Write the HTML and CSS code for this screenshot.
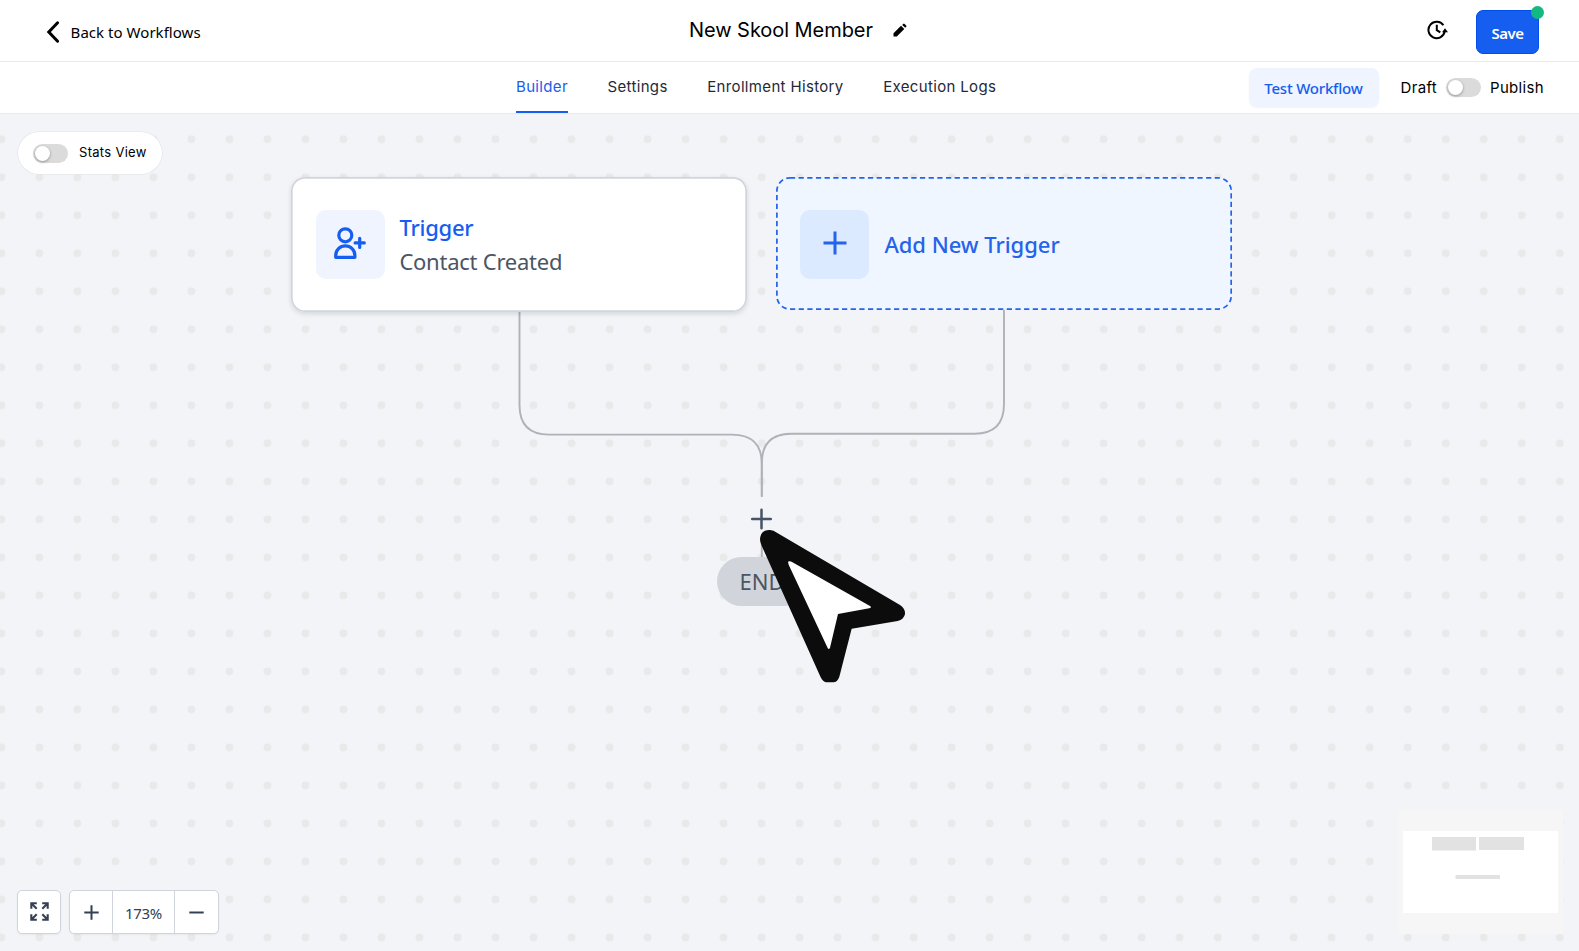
FILE: index.html
```html
<!DOCTYPE html>
<html lang="en">
<head>
<meta charset="utf-8">
<title>New Skool Member</title>
<link rel="stylesheet" href="styles.css">
</head>
<body>
<header class="topbar">
  <a class="back">
    <svg width="14" height="24" viewBox="0 0 14 24"><path d="M11.6 2.8 2.8 12l8.8 9.2" fill="none" stroke="#000" stroke-width="3" stroke-linecap="round"/></svg>
    <span class="back-label">Back to Workflows</span>
  </a>
  <div class="title">
    <span class="title-text">New Skool Member</span>
    <svg class="pencil" width="14" height="14" viewBox="0 0 14 14"><path d="M.5 10.2 8 2.7l3.3 3.3-7.5 7.5H.5zM9.2 1.9l1-1q.7-.6 1.4 0l1.6 1.6q.6.7 0 1.3l-1 1z"/></svg>
  </div>
  <div class="actions">
    <svg class="history" width="21" height="20" viewBox="0 0 21 20"><g fill="none" stroke="#000" stroke-width="2"><path d="M16.4 5.3A8.2 8.2 0 1 0 17.7 11.5"/><path d="M9.8 4.8v5.4l3.5 2.2"/></g><path d="M18 8.2l3 4h-6z"/></svg>
    <button class="save">Save<i class="unsaved"></i></button>
  </div>
</header>
<nav class="subbar">
  <div class="tabs">
    <a class="tab tab-active">Builder</a>
    <a class="tab">Settings</a>
    <a class="tab">Enrollment History</a>
    <a class="tab">Execution Logs</a>
  </div>
  <div class="status">
    <button class="test">Test Workflow</button>
    <span class="state draft">Draft</span>
    <i class="toggle"></i>
    <span class="state">Publish</span>
  </div>
</nav>
<main class="canvas">
  <svg class="layer" width="1579" height="837">
    <defs><pattern id="dots" x="-17.65" y="6.2" width="38.01" height="38.01" patternUnits="userSpaceOnUse"><circle cx="19" cy="19" r="3.9" fill="#e8e9e9"/></pattern></defs>
    <rect width="1579" height="837" fill="url(#dots)"/>
    <g fill="none" stroke="#b1b1b7" stroke-width="1.9">
      <path d="M519.5 197v94Q519.5 320.6 549 320.6H732Q761.8 320.6 761.8 350V382.7"/>
      <path d="M1004 196v94Q1004 319.7 974.5 319.7H791.5Q761.8 319.7 761.8 349V382.7"/>
    </g>
    <rect x="743" y="386" width="38" height="38" rx="8" fill="#f2f4f7"/>
    <path d="M761.8 427v17" stroke="#b1b1b7" stroke-width="1.9"/>
    <path d="M761.5 395.7v18.6M752.2 405h18.6" stroke="#475467" stroke-width="2.5" stroke-linecap="round"/>
  </svg>
  <section class="node trigger">
    <div class="tile"><svg width="40" height="40" viewBox="0 0 40 40" fill="none" stroke="#155eef" stroke-width="3.2" stroke-linecap="round" stroke-linejoin="round"><circle cx="15.3" cy="11.3" r="6.5"/><path d="M5.7 33.3v-1.8a9.6 9.6 0 0 1 19.2 0v1.8zM29.7 14.3v9.2M25.1 18.9h9.2"/></svg></div>
    <div class="copy"><span class="kind">Trigger</span><span class="desc">Contact Created</span></div>
  </section>
  <section class="node add">
    <svg class="dash" width="456" height="133"><rect x=".9" y=".9" width="454.3" height="131.2" rx="13" fill="#eff6ff" stroke="#2563eb" stroke-width="1.73" stroke-dasharray="5.25 3.42"/></svg>
    <div class="tile tile-add"><svg width="24" height="24" viewBox="0 0 24 24"><path d="M12 .5v23M.5 12h23" stroke="#2563eb" stroke-width="3"/></svg></div>
    <span class="add-label">Add New Trigger</span>
  </section>
  <div class="end">END</div>
  <svg class="cursor" width="220" height="210" viewBox="0 0 660 630">
    <path fill="#0c0c0c" d="M180 178Q182 150 208 150Q219 149 232 159L600 375Q616 385 615 402Q612 418 593 423L455 446L418 590Q412 607 400 607H378Q369 605 362 592L185 197Q180 187 180 178Z"/>
    <path fill="#fff" d="M264 245Q268 241 280 248L510 378Q517 382 508 385L414 402L390 503Q387 510 383 504L266 254Z"/>
  </svg>
  <div class="stats"><i class="toggle"></i><span>Stats View</span></div>
  <div class="controls">
    <button class="ctl fit"><svg width="19" height="19" viewBox="0 0 19 19" fill="none" stroke="#344054" stroke-width="2.1"><path d="M1.3 6.8V1.3h5.5M1.5 1.5l5.2 5.2M12.2 1.3h5.5v5.5M17.5 1.5l-5.2 5.2M1.3 12.2v5.5h5.5M1.5 17.5l5.2-5.2M12.2 17.7h5.5v-5.5M17.5 17.5l-5.2-5.2"/></svg></button>
    <div class="zoom">
      <button class="ctl"><svg width="15" height="15" viewBox="0 0 15 15"><path d="M7.5 .3v14.4M.3 7.5h14.4" stroke="#344054" stroke-width="2"/></svg></button>
      <span class="percent">173%</span>
      <button class="ctl"><svg width="15" height="15" viewBox="0 0 15 15"><path d="M.3 7.5h14.4" stroke="#344054" stroke-width="2"/></svg></button>
    </div>
  </div>
  <svg class="minimap" width="165" height="124"><rect width="165" height="124" fill="#f6f6f6"/><rect x="5" y="21" width="155" height="82" fill="#fff"/><path fill="#e2e2e2" d="M34 27h44v13.6H34zM81 27h45v13H81zM57.5 65H102v4H57.5z"/></svg>
</main>
</body>
</html>
```
FILE: styles.css
```css
* { box-sizing: border-box; }
body { margin: 0; width: 1579px; height: 951px; overflow: hidden; background: #fff; color: #000; font-family: Inter, sans-serif; }
button { border: 0; padding: 0; margin: 0; font: inherit; }
svg { display: block; flex: none; }

.topbar { height: 62px; border-bottom: 1px solid #e9eaeb; display: grid; grid-template-columns: 689px auto 1fr; align-items: start; }
.back { display: flex; align-items: center; margin: 20px 0 0 46px; gap: 10.6px; height: 24px; }
.back-label { font: 400 15px/24px "Noto Sans", sans-serif; letter-spacing: .04px; }
.title { display: flex; align-items: center; gap: 20px; height: 60px; }
.title-text { font-size: 20px; letter-spacing: -.06px; }
.actions { display: flex; justify-content: flex-end; align-items: center; gap: 28px; padding: 10px 40px 0 0; }
.history { margin-top: -4px; }
.save { position: relative; width: 63px; height: 44px; border-radius: 7px; border: 1px solid #004eeb; background: #155eef; color: #fff; font: 600 15px/44px "Noto Sans", sans-serif; letter-spacing: -.5px; }
.unsaved { position: absolute; right: -6px; top: -5px; width: 13px; height: 13px; border-radius: 50%; background: #12b981; }

.subbar { height: 52px; border-bottom: 1px solid #e9eaeb; display: flex; justify-content: space-between; padding: 0 35px 0 516px; }
.tabs { display: flex; gap: 39.6px; }
.tab { height: 51px; line-height: 49px; font-size: 15px; letter-spacing: .34px; color: #1f2937; border-bottom: 2px solid transparent; white-space: nowrap; }
.tab-active { color: #155eef; border-color: #155eef; }
.status { display: flex; align-items: center; }
.test { width: 130px; height: 39px; border-radius: 8px; background: #eff4ff; color: #155eef; font: 500 15px/41px "Noto Sans", sans-serif; letter-spacing: -.2px; box-shadow: 0 1px 2px rgba(16,24,40,.05); }
.draft { margin-left: 22px; }
.state { font-size: 15px; letter-spacing: .33px; line-height: 49px; }
.status .toggle { margin: 0 9px; }
.toggle { position: relative; flex: none; width: 35px; height: 19px; border-radius: 10px; background: #dbdbdb; }
.toggle::before { content: ""; position: absolute; left: 2px; top: 2px; width: 15px; height: 15px; border-radius: 50%; background: #fff; box-shadow: 0 1px 3px rgba(0,0,0,.35); }

.canvas { position: relative; height: 837px; background: #f2f4f7; overflow: hidden; }
.layer { position: absolute; left: 0; top: 0; }
.node { position: absolute; top: 63px; display: flex; align-items: center; width: 456px; border-radius: 14px; }
.trigger { left: 291.4px; height: 134.6px; padding-left: 24.4px; background: #fff; box-shadow: inset 0 0 0 1.7px #d1d5db, 0 2px 5px rgba(16,24,40,.13); }
.add { left: 776px; height: 133px; padding: 1px 0 0 24.4px; }
.dash { position: absolute; left: 0; top: 0; }
.tile { position: relative; width: 69px; height: 69px; border-radius: 10px; background: #eff4ff; display: grid; place-items: center; }
.tile-add { background: #dbeafe; }
.tile-add svg { margin-top: -3px; }
.copy { display: flex; flex-direction: column; margin-left: 14.6px; font: 22px/34px "Noto Sans", sans-serif; letter-spacing: -.24px; }
.kind { font-weight: 500; color: #155eef; }
.desc { color: #4b5563; }
.add-label { position: relative; margin-left: 15px; font: 500 22px/34px "Noto Sans", sans-serif; letter-spacing: -.04px; color: #2563eb; }
.end { position: absolute; left: 717px; top: 443px; width: 90px; height: 49px; border-radius: 25px; background: #d1d5db; color: #4b5563; font: 22px/49px "Noto Sans", sans-serif; padding-left: 22.6px; }
.cursor { position: absolute; left: 700px; top: 366px; }
.stats { position: absolute; left: 18px; top: 18px; width: 144px; height: 42px; border-radius: 21px; background: #fff; box-shadow: 0 0 0 .6px #e0e3e8; display: flex; align-items: center; gap: 11px; padding: 0 0 0 15px; font-size: 13px; line-height: 18px; letter-spacing: .3px; }
.stats span { margin-top: -2px; }
.controls { position: absolute; left: 17px; top: 776px; display: flex; gap: 8px; height: 44px; }
.ctl { width: 44px; height: 100%; background: transparent; display: grid; place-items: center; }
.fit, .zoom { border: 1px solid #d0d5dd; border-radius: 5px; background: #fff; box-shadow: 0 1px 2px rgba(16,24,40,.05); }
.fit { padding: 0 0 1px 0; }
.zoom { display: flex; width: 150px; }
.zoom .ctl { width: 42px; }
.zoom .ctl:last-child { width: 43px; }
.percent { width: 63px; border: solid #d0d5dd; border-width: 0 1px; text-align: center; font: 15px/44px "Noto Sans", sans-serif; letter-spacing: -.3px; color: #344054; }
.minimap { position: absolute; left: 1398px; top: 696px; }
```
